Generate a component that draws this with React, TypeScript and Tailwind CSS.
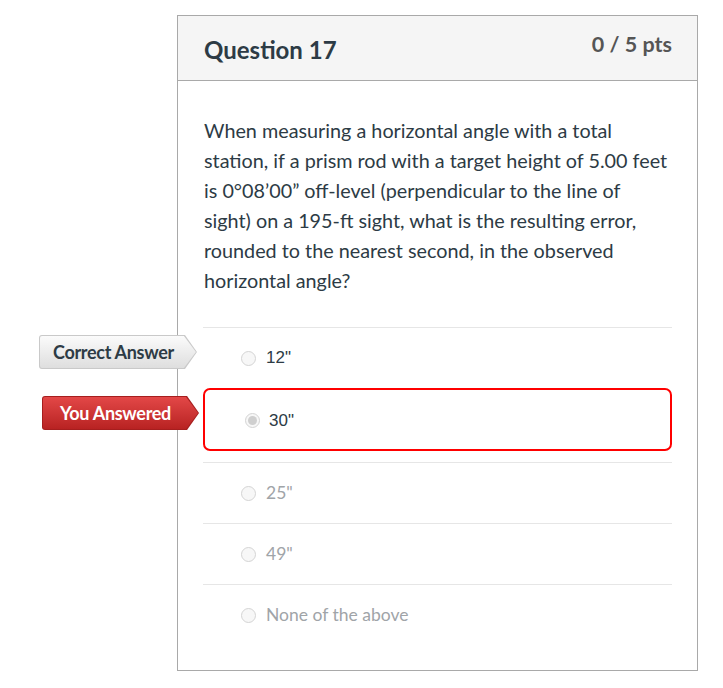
import React from "react";

type Answer = { text: string; state: "correct" | "wrong" | "plain" };

const answers: Answer[] = [
  { text: '12"', state: "correct" },
  { text: '30"', state: "wrong" },
  { text: '25"', state: "plain" },
  { text: '49"', state: "plain" },
  { text: "None of the above", state: "plain" },
];

const questionLines = [
  "When measuring a horizontal angle with a total",
  "station, if a prism rod with a target height of 5.00 feet",
  "is 0°08’00” off-level (perpendicular to the line of",
  "sight) on a 195-ft sight, what is the resulting error,",
  "rounded to the nearest second, in the observed",
  "horizontal angle?",
];

function Radio({ checked }: { checked?: boolean }) {
  return (
    <span className="w-[15px] h-[15px] rounded-full border border-[#d4d4d4] bg-[#f7f7f7] flex items-center justify-center shrink-0">
      {checked && <span className="w-[9px] h-[9px] rounded-full bg-[#cfcfcf]" />}
    </span>
  );
}

function Tag({ label, red }: { label: string; red?: boolean }) {
  const shape = "[clip-path:polygon(0_0,calc(100%-12px)_0,100%_50%,calc(100%-12px)_100%,0_100%)]";
  return (
    <div className={`${shape} ${red ? "bg-[#a61e1e]" : "bg-[#c9c9c9]"} p-px rounded-l-[3px]`}>
      <div
        className={`${shape} h-[32px] flex items-center font-bold text-[18px] tracking-[-0.3px] rounded-l-[2px] ${
          red
            ? "pl-[17px] pr-[27px] bg-gradient-to-b from-[#e34747] to-[#b82222] text-white"
            : "pl-[13px] pr-[22px] bg-gradient-to-b from-[#fbfbfb] to-[#dedede] text-[#2d3b45]"
        }`}
      >
        {label}
      </div>
    </div>
  );
}

export default function App() {
  return (
    <div className="w-[723px] h-[688px] bg-white relative font-['Lato','Noto_Sans',sans-serif] text-[#2d3b45]">
      <div className="absolute left-0 top-0 w-full pt-[15px] pl-[177px]">
        <div className="w-[521px] border border-[#a9a9a9]">
          <div className="h-[65px] bg-[#f5f5f5] border-b border-[#a9a9a9] flex justify-between pl-[26px] pr-[25px]">
            <h2 className="text-[24px] font-bold pt-[19px] leading-[30px]">Question 17</h2>
            <div className="text-[21.5px] font-bold text-[#555] pt-[13px] leading-[30px]">0 / 5 pts</div>
          </div>
          <div className="px-[25px] pt-[34px] pb-[25px]">
            <p className="text-[19.8px] leading-[30px] pl-px -mr-[10px] whitespace-nowrap">
              {questionLines.map((line, i) => (
                <React.Fragment key={i}>
                  {line}
                  {i < questionLines.length - 1 && <br />}
                </React.Fragment>
              ))}
            </p>
            <div className="mt-[32px]">
              {answers.map((a, i) =>
                a.state === "wrong" ? (
                  <div key={i} className="relative mb-[11px]">
                    <div className="absolute left-[-161px] top-[8px]">
                      <Tag label="You Answered" red />
                    </div>
                    <div className="h-[63px] border-2 border-[#ff0000] rounded-[7px] flex items-center gap-[9px] pl-[40px] pt-[2px]">
                      <Radio checked />
                      <span className="font-['Liberation_Sans',Arial,sans-serif] text-[17px] text-[#2d3b45]">{a.text}</span>
                    </div>
                  </div>
                ) : (
                  <div key={i} className="relative h-[61px] border-t border-[#e6e6e6] flex items-center gap-[10px] pl-[38px]">
                    {a.state === "correct" && (
                      <div className="absolute left-[-164px] top-[7px]">
                        <Tag label="Correct Answer" />
                      </div>
                    )}
                    <Radio />
                    <span
                      className={
                        a.state === "correct"
                          ? "font-['Liberation_Sans',Arial,sans-serif] text-[17px] text-[#2d3b45]"
                          : "text-[17.5px] text-[#a0a4a8]"
                      }
                    >
                      {a.text}
                    </span>
                  </div>
                )
              )}
            </div>
          </div>
        </div>
      </div>
    </div>
  );
}
